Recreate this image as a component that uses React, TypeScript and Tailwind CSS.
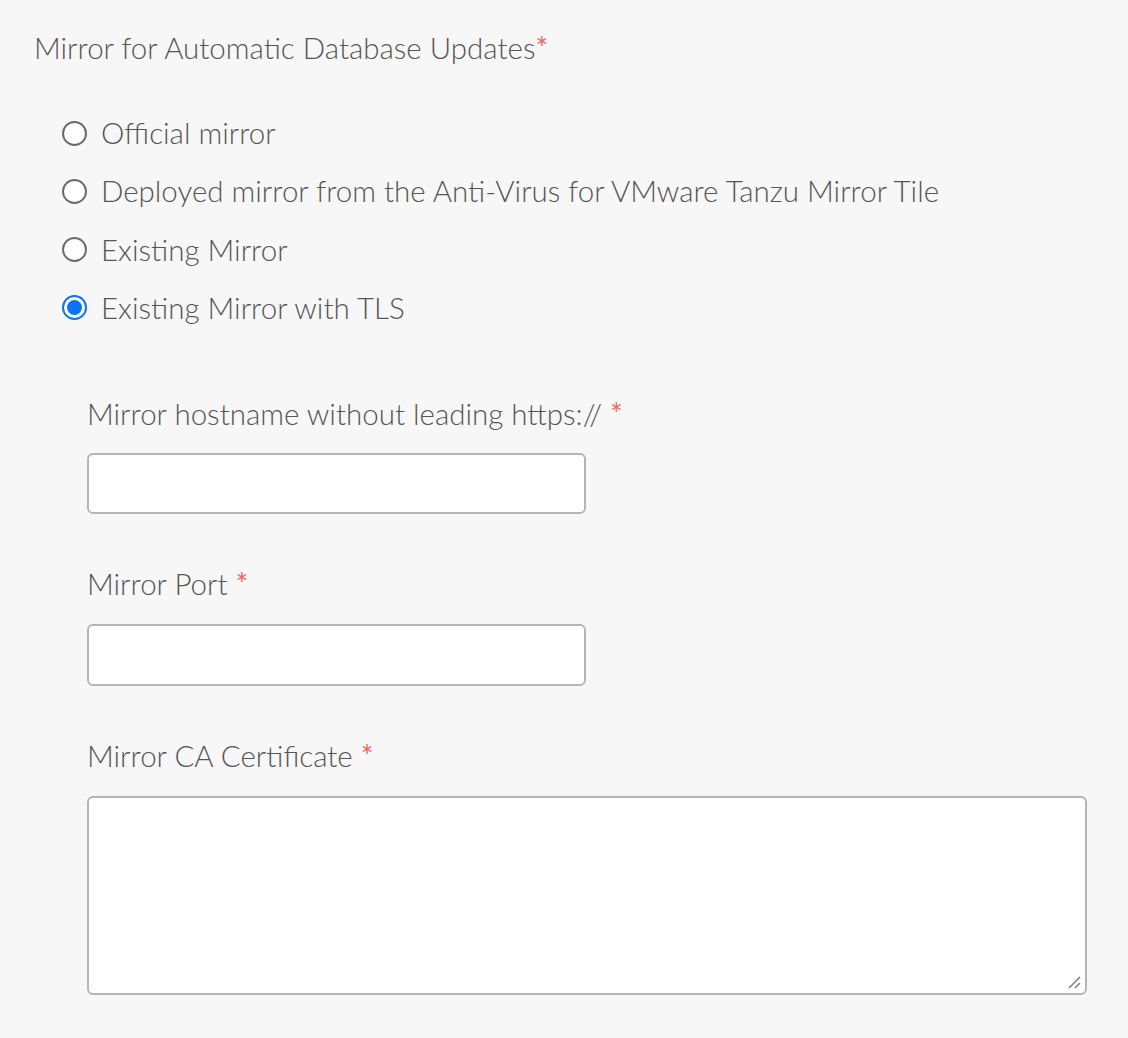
import React from "react";

const font = { fontFamily: "Lato, 'Open Sans', sans-serif" };
const txt = "text-[29.5px] leading-[40px] text-[#555555] font-light";
const star = "text-[#f2675c] text-[30px] font-normal";

function Radio({ checked, label }: { checked?: boolean; label: string }) {
  return (
    <div className="flex items-center h-[40px]">
      {checked ? (
        <span className="w-[25px] h-[25px] rounded-full border-[2px] border-[#0a72f5] bg-white flex items-center justify-center shrink-0">
          <span className="w-[15px] h-[15px] rounded-full bg-[#0a72f5]" />
        </span>
      ) : (
        <span className="w-[25px] h-[25px] rounded-full border-[2px] border-[#6b6b6b] bg-white shrink-0" />
      )}
      <span className={"ml-[14px] " + txt}>{label}</span>
    </div>
  );
}

export default function App() {
  return (
    <div className="w-[1128px] h-[1038px] bg-[#f7f7f7] overflow-hidden" style={font}>
      <div className="pt-[27px] pl-[34px]">
        <div className={txt}>
          Mirror for Automatic Database Updates<span className={star}>*</span>
        </div>
        <div className="mt-[45px] ml-[28px] flex flex-col gap-[18.3px]">
          <Radio label="Official mirror" />
          <Radio label="Deployed mirror from the Anti-Virus for VMware Tanzu Mirror Tile" />
          <Radio label="Existing Mirror" />
          <Radio checked label="Existing Mirror with TLS" />
        </div>
        <div className="ml-[53px] mt-[65px] flex flex-col">
          <div className={txt}>
            Mirror hostname without leading https:// <span className={star}>*</span>
          </div>
          <div className="mt-[19px] w-[499px] h-[61px] bg-white border-[2px] border-[#b5b5b5] rounded-[6px]" />
          <div className={"mt-[49px] " + txt}>
            Mirror Port <span className={star}>*</span>
          </div>
          <div className="mt-[20px] w-[499px] h-[62px] bg-white border-[2px] border-[#b5b5b5] rounded-[6px]" />
          <div className={"mt-[49px] " + txt}>
            Mirror CA Certificate <span className={star}>*</span>
          </div>
          <div className="mt-[20px] w-[1000px] h-[199px] bg-white border-[2px] border-[#b5b5b5] rounded-[6px] relative">
            <svg className="absolute right-[3px] bottom-[3px]" width="16" height="16" viewBox="0 0 16 16">
              <line x1="3" y1="14" x2="14" y2="3" stroke="#7a7a7a" strokeWidth="1.5" />
              <line x1="9" y1="14" x2="14" y2="9" stroke="#7a7a7a" strokeWidth="1.5" />
            </svg>
          </div>
        </div>
      </div>
    </div>
  );
}
